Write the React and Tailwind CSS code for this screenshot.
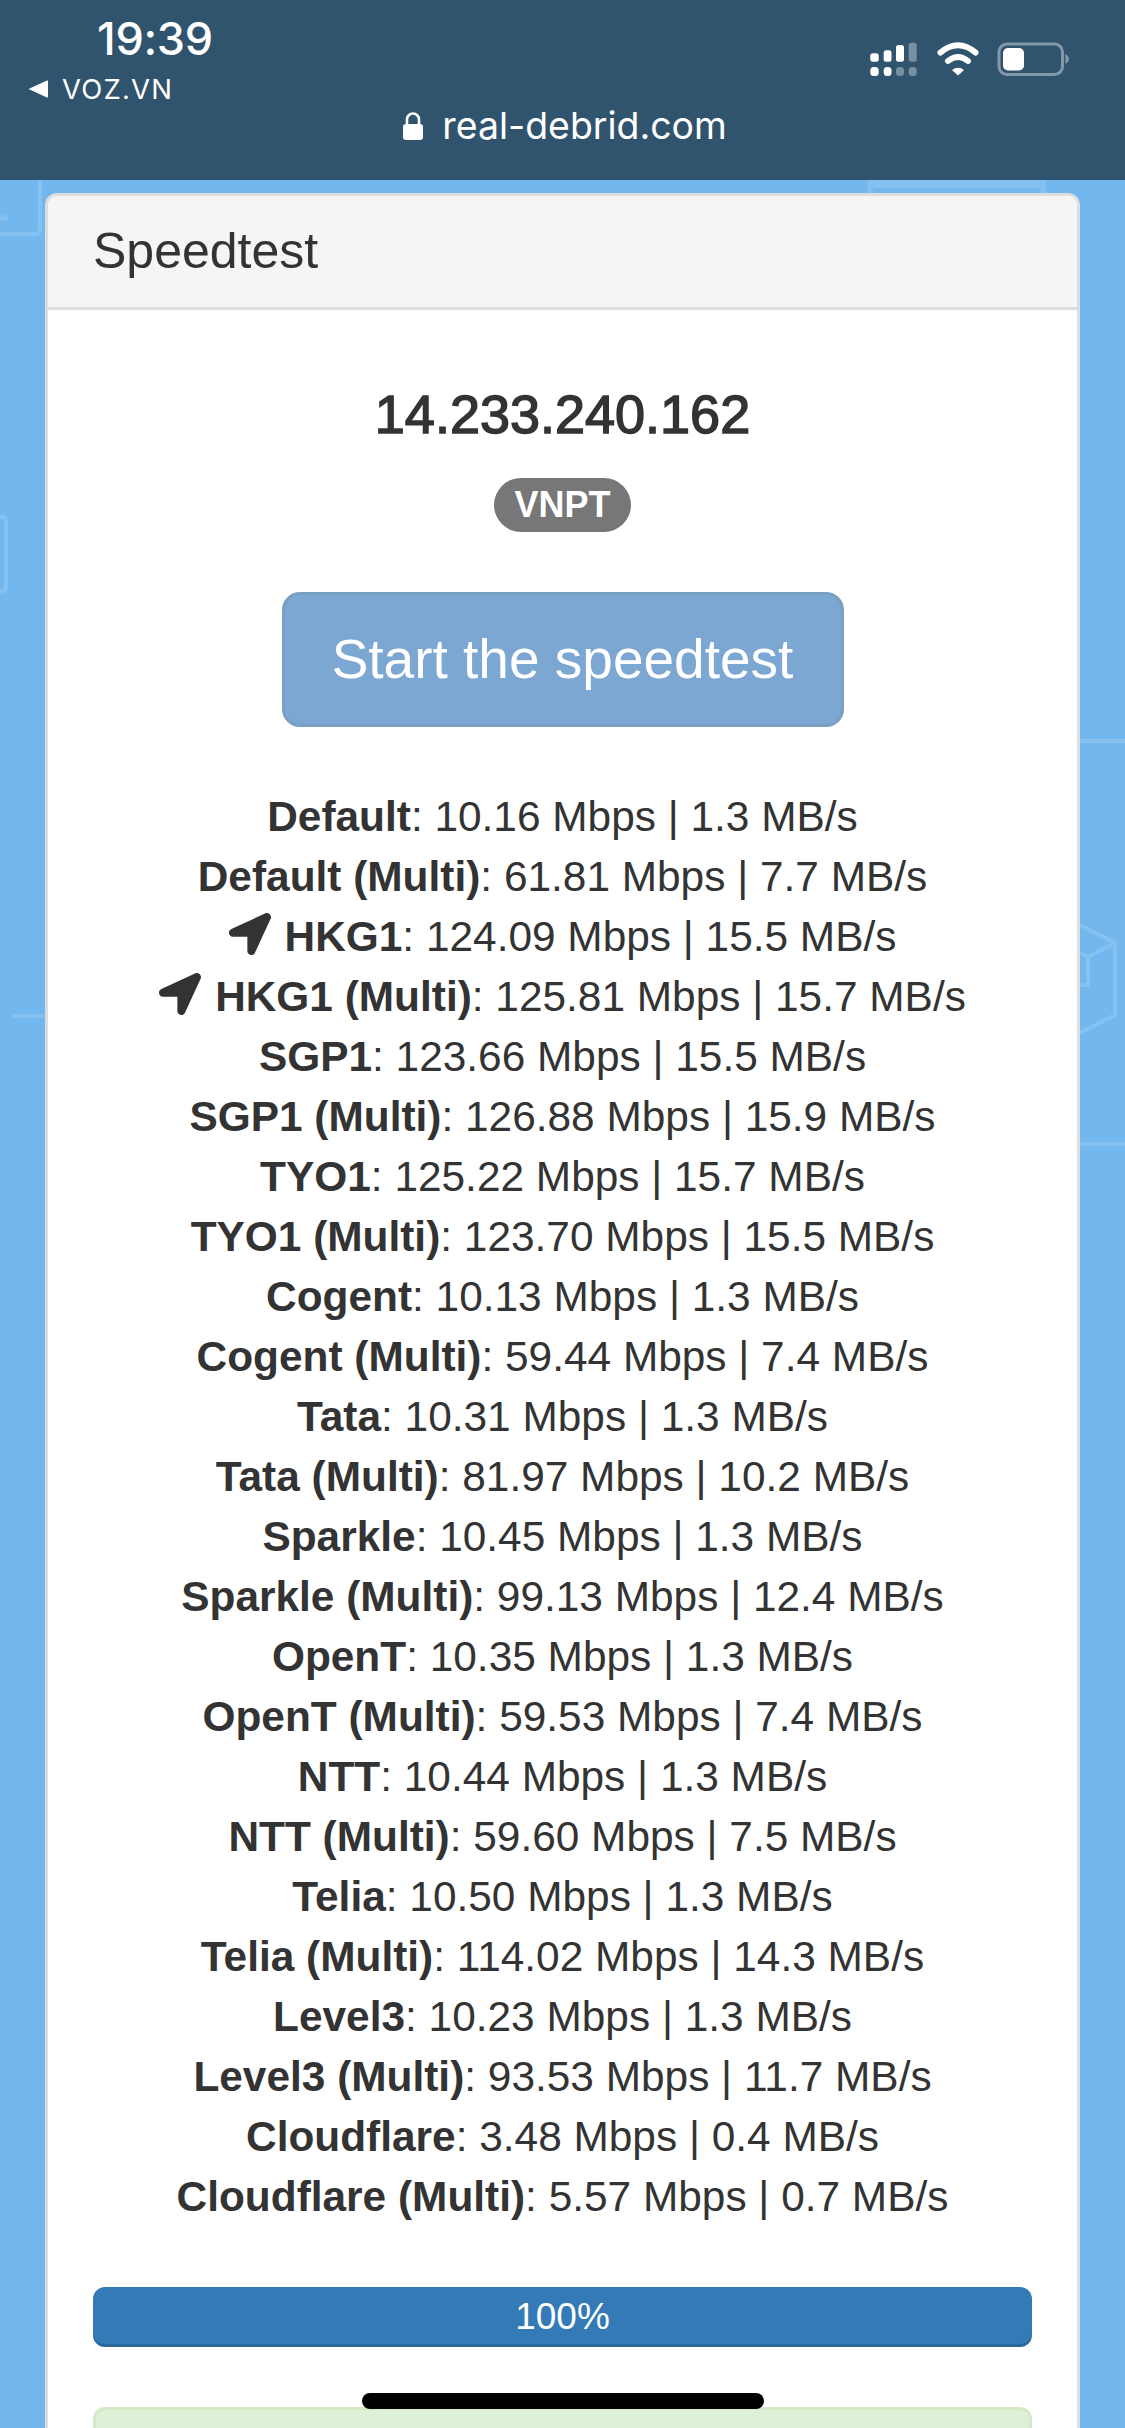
import React from "react";
import { FaLocationArrow } from "react-icons/fa";

const rows = [
  ["Default", "10.16 Mbps | 1.3 MB/s"],
  ["Default (Multi)", "61.81 Mbps | 7.7 MB/s"],
  ["HKG1", "124.09 Mbps | 15.5 MB/s", true],
  ["HKG1 (Multi)", "125.81 Mbps | 15.7 MB/s", true],
  ["SGP1", "123.66 Mbps | 15.5 MB/s"],
  ["SGP1 (Multi)", "126.88 Mbps | 15.9 MB/s"],
  ["TYO1", "125.22 Mbps | 15.7 MB/s"],
  ["TYO1 (Multi)", "123.70 Mbps | 15.5 MB/s"],
  ["Cogent", "10.13 Mbps | 1.3 MB/s"],
  ["Cogent (Multi)", "59.44 Mbps | 7.4 MB/s"],
  ["Tata", "10.31 Mbps | 1.3 MB/s"],
  ["Tata (Multi)", "81.97 Mbps | 10.2 MB/s"],
  ["Sparkle", "10.45 Mbps | 1.3 MB/s"],
  ["Sparkle (Multi)", "99.13 Mbps | 12.4 MB/s"],
  ["OpenT", "10.35 Mbps | 1.3 MB/s"],
  ["OpenT (Multi)", "59.53 Mbps | 7.4 MB/s"],
  ["NTT", "10.44 Mbps | 1.3 MB/s"],
  ["NTT (Multi)", "59.60 Mbps | 7.5 MB/s"],
  ["Telia", "10.50 Mbps | 1.3 MB/s"],
  ["Telia (Multi)", "114.02 Mbps | 14.3 MB/s"],
  ["Level3", "10.23 Mbps | 1.3 MB/s"],
  ["Level3 (Multi)", "93.53 Mbps | 11.7 MB/s"],
  ["Cloudflare", "3.48 Mbps | 0.4 MB/s"],
  ["Cloudflare (Multi)", "5.57 Mbps | 0.7 MB/s"],
];

function StatusIcons() {
  return (
    <svg width="200" height="34" viewBox="868 41 200 34" className="block">
      <g fill="#fff">
        <rect x="868.3" y="52.3" width="8.4" height="8.4" rx="2.5" />
        <rect x="881.7" y="49.3" width="7.8" height="11.4" rx="2.5" />
        <rect x="894" y="44" width="8" height="16.7" rx="2.5" />
        <rect x="906.7" y="41.7" width="8" height="19" rx="2.5" opacity="0.35" />
        <rect x="868.3" y="66" width="8.4" height="9" rx="3.5" />
        <rect x="881.7" y="66" width="7.8" height="9" rx="3.5" />
        <rect x="894" y="66" width="8" height="9" rx="3.5" opacity="0.35" />
        <rect x="906.7" y="66" width="8" height="9" rx="3.5" opacity="0.35" />
      </g>
      <g fill="none" stroke="#fff" strokeWidth="6" strokeLinecap="round">
        <path d="M938.5 51.5 Q956 37 973.5 51.5" />
        <path d="M946 60 Q956 52 966 60" />
      </g>
      <path d="M950 69 Q956 64.5 962 69 L956 74.5 Z" fill="#fff" />
      <rect x="997" y="43" width="63.5" height="30.5" rx="8" fill="none" stroke="#fff" strokeOpacity="0.4" strokeWidth="3" />
      <rect x="1001" y="47" width="21" height="22.5" rx="5" fill="#fff" />
      <path d="M1063.3 53 Q1067 55 1067 58 Q1067 61 1063.3 63 Z" fill="#fff" fillOpacity="0.4" />
    </svg>
  );
}

function Backdrop() {
  return (
    <svg className="absolute left-0 top-0" width="1125" height="1200" viewBox="0 0 1125 1200" fill="none" stroke="#85c2f1" strokeWidth="4">
      <path d="M40 180 V228 Q40 234 34 234 H0" />
      <path d="M0 218 H8" strokeWidth="5" />
      <path d="M0 517 H2 Q6 517 6 522 V586 Q6 591 2 591 H0" />
      <path d="M12 1016 H45" />
      <path d="M1080 741 H1125" />
      <path d="M1080 1144 H1125" />
      <path d="M1080 925 L1115 943 V1015 L1080 1033" />
      <path d="M1115 943 L1088 957 L1080 953" />
      <path d="M1088 957 V985 H1080" />
      <path d="M870 193 V182 H1043 V193" strokeWidth="5" />
      <rect x="873" y="180" width="167" height="8" fill="#85c2f1" stroke="none" />
    </svg>
  );
}

export default function App() {
  return (
    <div className="relative h-[2428px] w-[1125px] overflow-hidden bg-[#72b8ee] [font-family:'Liberation_Sans',Arial,sans-serif] text-[#333333]">
      <Backdrop />

      <header className="relative h-[180px] bg-[#31546e] text-white [font-family:Inter,sans-serif]">
        <div className="flex h-[103px] justify-between pl-[28px] pr-[55px]">
          <div className="flex flex-col">
            <div className="ml-[69px] mt-[15px] h-[48px] text-[45px] leading-[48px] font-medium tracking-[-0.3px]">19:39</div>
            <div className="mt-[10px] flex items-center gap-[14px]">
              <svg width="20" height="18" viewBox="0 0 20 18" className="block">
                <path d="M0.5 9 L19 0.5 Q20 0 20 1.5 V16.5 Q20 18 19 17.5 Z" fill="#fff" />
              </svg>
              <span className="text-[27.5px] leading-[32px] tracking-[1.2px]">VOZ.VN</span>
            </div>
          </div>
          <div className="pt-[42px]">
            <StatusIcons />
          </div>
        </div>
        <div className="flex items-center justify-center gap-[19px] pl-[5px]">
          <svg width="20" height="28" viewBox="0 0 20 28" className="block">
            <path d="M4 13 V7.5 a6 6 0 0 1 12 0 V13" fill="none" stroke="#fff" strokeWidth="2.6" />
            <rect x="0" y="12" width="20" height="16" rx="3" fill="#fff" />
          </svg>
          <span className="text-[37.4px] leading-[46px]">real-debrid.com</span>
        </div>
      </header>

      <main className="relative mx-[45px] mt-[13px] rounded-[12px] border-[3px] border-[#dddddd] bg-white">
        <div className="h-[114px] rounded-t-[9px] border-b-[3px] border-[#dddddd] bg-[#f5f5f5] pl-[45px] text-[50px] leading-[111px]">
          Speedtest
        </div>
        <div className="flex flex-col items-center px-[45px] pb-[60px] pt-[74px]">
          <div className="h-[60px] text-[54px] leading-[60px] [-webkit-text-stroke:1.5px_#333333]">14.233.240.162</div>
          <div className="mt-[34px] h-[54px] rounded-[30px] bg-[#777777] px-[20px] py-[9px] text-[36px] font-bold leading-[36px] text-white">
            VNPT
          </div>
          <div className="mt-[60px] flex h-[135px] w-[562px] items-center justify-center rounded-[18px] border-[3px] border-[#77a0c4] bg-[#7ca7d2] text-[55px] text-white">
            Start the speedtest
          </div>
          <div className="mt-[60px] w-full text-center text-[42.4px] leading-[60px]">
            {rows.map(([name, value, arrow]) => (
              <div key={name} className="h-[60px] whitespace-nowrap">
                {arrow && <FaLocationArrow className="mr-[14px] inline-block h-[42px] w-[42px] align-[-4px] text-[#333333]" />}
                <b className="font-bold">{name}</b>: {value}
              </div>
            ))}
          </div>
          <div className="mt-[60px] h-[60px] w-full rounded-[12px] bg-[#337ab7] text-center text-[37px] leading-[60px] text-white shadow-[inset_0_-3px_0_rgba(0,0,0,0.15)]">
            100%
          </div>
          <div className="mt-[60px] h-[120px] w-full rounded-[12px] border-[3px] border-[#d6e9c6] bg-[#dff0d8]" />
        </div>
      </main>

      <div className="absolute left-[362px] top-[2393px] h-[16px] w-[402px] rounded-[8px] bg-black" />
    </div>
  );
}
